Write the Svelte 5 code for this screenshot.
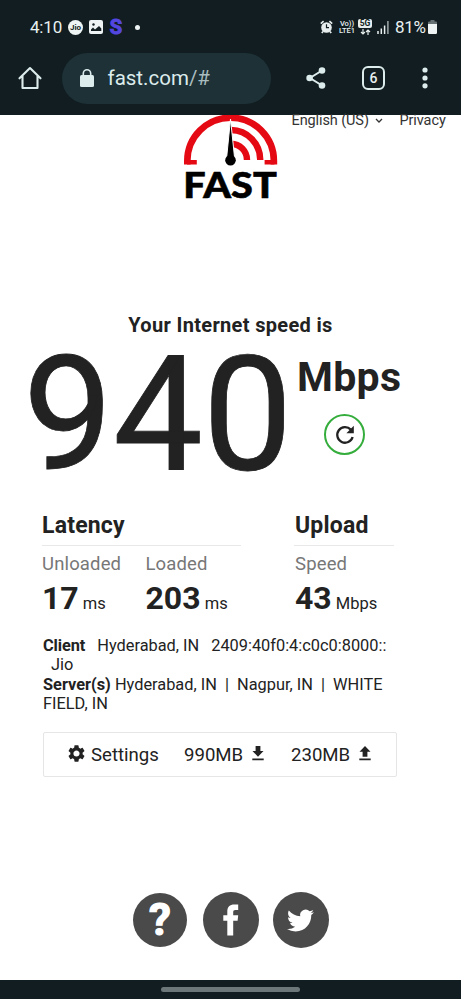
<script>
	let speed = $state(940);

	const latency = [
		{ label: 'Unloaded', value: 17, unit: 'ms' },
		{ label: 'Loaded', value: 203, unit: 'ms' }
	];
	const upload = [{ label: 'Speed', value: 43, unit: 'Mbps' }];
</script>

{#snippet metrics(items)}
	<div class="metrics">
		{#each items as item}
			<div class="metric">
				<div class="metric-label">{item.label}</div>
				<div class="metric-value"><b>{item.value}</b> <span>{item.unit}</span></div>
			</div>
		{/each}
	</div>
{/snippet}

<div class="phone">
	<header class="chrome">
		<div class="status">
			<span class="clock">4:10</span>
			<span class="jio">Jio</span>
			<svg class="photo" width="14" height="14" viewBox="0 0 14 14">
				<rect width="14" height="14" rx="2" fill="#eef3f3" />
				<path d="M2 11V9.500l2-2 2 2 4-3.500 2.300 2.500V11z" fill="#111d20" />
				<circle cx="4.500" cy="4.500" r="1.200" fill="#111d20" />
			</svg>
			<span class="s-logo">S</span>
			<span class="dot"></span>
			<span class="spacer"></span>
			<svg class="alarm" width="13" height="14" viewBox="0 0 13 14">
				<circle cx="6.500" cy="7.500" r="5.300" fill="#e8eeee" />
				<path d="M.8 3.600 3.600 1.200M12.200 3.600 9.400 1.200M3 11.500 1.800 13M10 11.500 11.200 13" stroke="#e8eeee" stroke-width="1.700" />
				<path d="M6.500 4.300v3.400H9" fill="none" stroke="#111d20" stroke-width="1.200" />
			</svg>
			<span class="volte"><span>Vo))</span><span>LTE1</span></span>
			<span class="five-g">
				<span>5G</span>
				<svg width="11" height="6" viewBox="0 0 11 6">
					<path d="M3 0v5M1 3l2 2 2-2M8 6V1M6 3l2-2 2 2" fill="none" stroke="#e8eeee" stroke-width="1.200" />
				</svg>
			</span>
			<svg class="signal" width="12" height="13" viewBox="0 0 12 13">
				<path d="M1 10v3M4.300 7.500V13M7.600 4.500V13" stroke="#e8eeee" stroke-width="1.500" />
				<path d="M10.900 0v13" stroke="#9fa9ab" stroke-width="1.500" />
			</svg>
			<span class="percent">81%</span>
			<svg class="battery" width="9" height="14" viewBox="0 0 9 14">
				<path d="M2.500 0h4v1.500H8a1 1 0 0 1 1 1V6H0V2.500a1 1 0 0 1 1-1h1.500z" fill="#667174" />
				<path d="M0 4h9v8.800a1.200 1.200 0 0 1-1.200 1.200H1.200A1.200 1.200 0 0 1 0 12.800z" fill="#eef3f3" />
			</svg>
		</div>

		<div class="toolbar">
			<svg class="home" width="24" height="24" viewBox="0 0 24 24">
				<path d="M1.500 12.300 12 2l10.500 10.300M4.500 10v12h15V10" fill="none" stroke="#dcebec" stroke-width="2.100" stroke-linejoin="round" stroke-linecap="round" />
			</svg>
			<div class="address">
				<svg width="14" height="18" viewBox="0 0 14 18">
					<rect y="6" width="14" height="12" rx="1.500" fill="#dcebec" />
					<path d="M3.300 7V4.500a3.700 3.700 0 0 1 7.400 0V7" fill="none" stroke="#dcebec" stroke-width="1.600" />
				</svg>
				<span class="url">fast.com<i>/#</i></span>
			</div>
			<svg class="share" width="20" height="22" viewBox="0 0 20 22">
				<path d="M16 3.500 4 11l12 7.500" fill="none" stroke="#dcebec" stroke-width="2" />
				<circle cx="16" cy="3.500" r="3.300" fill="#dcebec" />
				<circle cx="3.600" cy="11" r="3.300" fill="#dcebec" />
				<circle cx="16" cy="18.500" r="3.300" fill="#dcebec" />
			</svg>
			<span class="tabs">6</span>
			<svg class="more" width="6" height="22" viewBox="0 0 6 22">
				<circle cx="3" cy="3" r="2.600" fill="#dcebec" />
				<circle cx="3" cy="11" r="2.600" fill="#dcebec" />
				<circle cx="3" cy="18.800" r="2.600" fill="#dcebec" />
			</svg>
		</div>
	</header>

	<main class="page">
		<div class="top">
			<svg class="logo" width="96" height="90" viewBox="183 115 96 90">
				<g fill="none" stroke="#e50914">
					<path d="M187.300 164.500V161a43.300 43.300 0 0 1 86.600 0v3.500" stroke-width="6.600" />
					<path d="M187 162.200h9.800M264.600 162.200h9.800" stroke-width="4.600" />
					<path d="M231 130a29.500 29.500 0 0 1 29.200 30" stroke-width="6.400" />
					<path d="M231 143.800a16.200 16.200 0 0 1 16 16.200" stroke-width="6.400" />
				</g>
				<path d="m230.500 119-3.800 38a5.500 5.500 0 0 0 7.800 0z" fill="#000" stroke="#fff" stroke-width="1" />
				<circle cx="230.500" cy="160.200" r="5.300" fill="#000" />
				<text x="183.300" y="197.500" textLength="93.500" lengthAdjust="spacingAndGlyphs">FAST</text>
			</svg>
			<nav class="links">
				<span class="lang">English (US)</span>
				<svg width="8" height="6" viewBox="0 0 8 6">
					<path d="m1 1 3 3 3-3" fill="none" stroke="#333" stroke-width="1.300" />
				</svg>
				<span class="privacy">Privacy</span>
			</nav>
		</div>

		<h1>Your Internet speed is</h1>

		<section class="speed">
			<div class="number">{speed}</div>
			<div class="side">
				<div class="unit">Mbps</div>
				<div class="refresh">
					<svg width="20" height="20" viewBox="0 0 20 20">
						<path d="M15.800 4.600A7.800 7.800 0 1 0 17.600 12" fill="none" stroke="#222" stroke-width="2.300" />
						<path d="M18.800.8v7.400h-7.400z" fill="#222" />
					</svg>
				</div>
			</div>
		</section>

		<section class="details">
			<div class="latency">
				<h2>Latency</h2>
				{@render metrics(latency)}
			</div>
			<div class="upload">
				<h2>Upload</h2>
				{@render metrics(upload)}
			</div>
		</section>

		<section class="info">
			<div><b class="client">Client</b><span class="place">Hyderabad, IN</span><span>2409:40f0:4:c0c0:8000::</span></div>
			<div class="isp">Jio</div>
			<div class="servers"><b>Server(s)</b> Hyderabad, IN &nbsp;|&nbsp; Nagpur, IN &nbsp;|&nbsp; WHITE</div>
			<div>FIELD, IN</div>
		</section>

		<section class="box">
			<svg class="gear" width="19" height="19" viewBox="2 2 20 20">
				<path fill="#222" d="M19.140 12.940c.04-.3.060-.61.060-.94s-.02-.64-.07-.94l2.030-1.580a.49.49 0 0 0 .12-.61l-1.920-3.320a.488.488 0 0 0-.59-.22l-2.390.96a7 7 0 0 0-1.620-.94l-.36-2.540a.484.484 0 0 0-.48-.41h-3.840c-.24 0-.43.17-.47.41l-.36 2.540c-.59.24-1.130.57-1.620.94l-2.390-.96a.48.48 0 0 0-.59.22L2.740 8.870c-.12.21-.08.47.12.61l2.030 1.580c-.05.3-.09.63-.09.94s.02.64.07.94l-2.030 1.580a.49.49 0 0 0-.12.61l1.920 3.320c.12.22.37.29.59.22l2.390-.96c.5.38 1.030.7 1.620.94l.36 2.540c.05.24.24.41.48.41h3.840c.24 0 .44-.17.47-.41l.36-2.540c.59-.24 1.130-.56 1.620-.94l2.390.96c.22.08.47 0 .59-.22l1.920-3.320a.48.48 0 0 0-.12-.61zM12 15.600A3.610 3.610 0 0 1 8.400 12c0-1.980 1.620-3.600 3.600-3.600s3.600 1.620 3.600 3.600-1.620 3.600-3.600 3.600" />
			</svg>
			<span class="settings">Settings</span>
			<span class="down">990MB</span>
			<svg class="arrow" width="12" height="15" viewBox="0 0 12 15">
				<path d="M3.600 0h4.800v5h3.100L6 10.800.5 5h3.100zM.3 12.500h11.400v1.700H.3z" fill="#222" />
			</svg>
			<span class="up">230MB</span>
			<svg class="arrow" width="12" height="15" viewBox="0 0 12 15">
				<path d="M3.600 10.800h4.800v-5h3.100L6 0 .5 5.800h3.100zM.3 12.500h11.400v1.700H.3z" fill="#222" />
			</svg>
		</section>

		<footer class="social">
			<span class="round help">?</span>
			<span class="round">
				<svg width="56" height="56" viewBox="0 0 56 56">
					<path fill="#fff" d="M24.300 43.500V28.700h-4v-5.500h4v-3.600c0-4.800 2.400-7.100 7.100-7.100h3.800v5.400h-2.700c-1.800 0-2.300.8-2.300 2.400v2.900h5l-.6 5.500h-4.400v14.800z" />
				</svg>
			</span>
			<span class="round">
				<svg width="27" height="27" viewBox="0 0 24 24">
					<path fill="#fff" d="M23.950 4.570a10 10 0 0 1-2.820.77 4.960 4.960 0 0 0 2.160-2.720c-.95.550-2 .95-3.130 1.180a4.920 4.920 0 0 0-8.380 4.480C7.690 8.090 4.070 6.130 1.640 3.160a4.820 4.820 0 0 0-.67 2.480c0 1.710.87 3.210 2.190 4.100a4.900 4.900 0 0 1-2.230-.620v.060a4.920 4.920 0 0 0 3.950 4.830 5 5 0 0 1-2.210.080 4.940 4.940 0 0 0 4.600 3.420A9.870 9.870 0 0 1 0 19.540a13.990 13.990 0 0 0 7.560 2.210c9.050 0 14-7.500 14-13.980 0-.210 0-.420-.020-.630a9.940 9.940 0 0 0 2.410-2.570z" />
				</svg>
			</span>
		</footer>
	</main>

	<div class="gesture"><span></span></div>
</div>

<style>
	:global(body) { margin: 0; background: #fff; }

	.phone {
		display: flex;
		flex-direction: column;
		width: 461px;
		height: 999px;
		overflow: hidden;
		font-family: Roboto, "Liberation Sans", sans-serif;
		color: #222;
	}

	svg { display: block; flex: none; }
	span, b { white-space: nowrap; }

	.chrome {
		height: 115px;
		flex: none;
		box-sizing: border-box;
		background: #111d20;
		color: #e8f0f0;
	}

	.status {
		display: flex;
		align-items: center;
		height: 48px;
		padding: 3px 24px 1px 30px;
	}

	.clock { width: 32px; font-size: 17px; letter-spacing: -0.2px; }

	.jio {
		width: 15px;
		height: 15px;
		margin-left: 6px;
		border-radius: 50%;
		background: #eef3f3;
		color: #111d20;
		font-size: 8px;
		font-weight: 700;
		line-height: 15px;
		text-align: center;
	}

	.photo { margin-left: 6px; }

	.s-logo {
		width: 14px;
		margin-left: 6px;
		color: #5347e0;
		font: 700 20px/20px Roboto, sans-serif;
		text-align: center;
		-webkit-text-stroke: 1px #5347e0;
	}

	.dot { width: 5px; height: 5px; margin-left: 11.500px; border-radius: 50%; background: #eef3f3; }
	.spacer { flex: 1; }

	.volte {
		display: flex;
		flex-direction: column;
		align-items: center;
		width: 18px;
		margin-left: 5px;
		font-size: 7.500px;
		font-weight: 500;
		line-height: 7px;
	}

	.five-g {
		display: flex;
		flex-direction: column;
		align-items: center;
		gap: 1px;
		width: 14px;
		margin-left: 2px;
	}

	.five-g span {
		width: 14px;
		border-radius: 2px;
		background: #e8eeee;
		color: #111d20;
		font-size: 8.500px;
		font-weight: 700;
		line-height: 9px;
		text-align: center;
	}

	.signal { margin-left: 5px; }
	.percent { width: 31px; margin-left: 6px; font-size: 17px; letter-spacing: -0.3px; }
	.battery { margin-left: 2px; }

	.toolbar { display: flex; align-items: center; height: 52px; padding-left: 18px; }

	.address {
		display: flex;
		align-items: center;
		box-sizing: border-box;
		width: 209px;
		height: 51px;
		margin-left: 20px;
		padding-left: 18px;
		border-radius: 26px;
		background: #1d3136;
	}

	.url { margin-left: 13.500px; font-size: 20.500px; line-height: 53px; color: #dcebec; }
	.url i { font-style: normal; color: #a9bcbf; }
	.share { margin-left: 35px; }

	.tabs {
		box-sizing: border-box;
		width: 23px;
		height: 24px;
		margin-left: 36px;
		border: 2.200px solid #dcebec;
		border-radius: 6px;
		font-size: 14px;
		font-weight: 500;
		line-height: 20px;
		text-align: center;
	}

	.more { margin-left: 37px; }

	.page { flex: 1; }

	.top { display: flex; height: 198px; }
	.logo { margin-left: 183px; }
	.logo text { font: 900 36px Lato, sans-serif; fill: #000; stroke: #000; stroke-width: 0.6px; }

	.links {
		display: flex;
		align-items: center;
		height: 11px;
		margin-left: 12.500px;
		font-size: 14.500px;
		letter-spacing: -0.1px;
		line-height: 11px;
		color: #333;
	}

	.lang { width: 77px; }
	.links svg { margin-left: 6px; }
	.privacy { margin-left: 17px; }

	h1 { margin: 0; font-size: 20px; letter-spacing: 0.330px; line-height: 24px; font-weight: 700; text-align: center; }

	.speed { display: flex; height: 168px; }

	.number {
		width: 274px;
		margin-left: 23px;
		font-size: 160px;
		line-height: 155px;
		-webkit-text-stroke: 0.8px #222;
	}

	.side { display: flex; flex-direction: column; align-items: flex-start; }
	.unit { height: 77px; padding-top: 14px; box-sizing: border-box; font-size: 41px; line-height: 52px; font-weight: 700; letter-spacing: 0.3px; }

	.refresh {
		display: flex;
		align-items: center;
		justify-content: center;
		box-sizing: border-box;
		width: 41px;
		height: 41px;
		margin-left: 27px;
		border: 2px solid #35ad3c;
		border-radius: 50%;
	}

	.details { display: flex; gap: 53px; height: 131px; padding: 5px 0 0 42px; box-sizing: border-box; }
	.latency { width: 199px; }
	.upload { width: 100px; }
	.upload h2 { text-indent: 1px; }
	.upload .metrics { margin-left: 1px; }

	h2 {
		margin: 0;
		border-bottom: 1px solid #e8e8e8;
		font-size: 23px;
		letter-spacing: 0.2px;
		line-height: 32px;
		padding-bottom: 3px;
		font-weight: 700;
	}

	.metrics { display: flex; gap: 4px; }
	.metric { width: 100px; flex: none; }
	.metric:first-child { width: 99.500px; }
	.metric-label { margin-top: 6px; font-size: 18.500px; letter-spacing: 0.150px; line-height: 25px; color: #777; }
	.metric-value { font-size: 16.500px; line-height: 43px; white-space: nowrap; }
	.metric-value b { font-size: 32px; }

	.info { height: 96px; padding: 0 0 0 43px; font-size: 16.350px; line-height: 19.400px; }
	.client { margin-right: 12px; letter-spacing: -0.1px; }
	.place { margin-right: 12px; }
	.isp { padding-left: 8px; }

	.box {
		display: flex;
		align-items: center;
		box-sizing: border-box;
		width: 354px;
		height: 45px;
		margin-left: 43px;
		padding-left: 24px;
		border: 1.500px solid #e6e6e6;
		border-radius: 2px;
		font-size: 18.600px;
	}

	.gear { width: 17px; height: 17px; margin-top: -3px; }
	.settings { width: 70px; margin-left: 6px; }
	.down { width: 60px; margin-left: 23px; }
	.up { width: 60px; margin-left: 27px; }
	.arrow { margin: -3px 0 0 8px; }

	.social { display: flex; align-items: center; gap: 14px; height: 56px; padding: 115px 0 0 133px; }

	.round {
		display: flex;
		align-items: center;
		justify-content: center;
		width: 56px;
		height: 56px;
		border-radius: 50%;
		background: #4a4a4a;
		color: #fff;
	}

	.help { width: 54px; height: 54px; margin-right: 1.500px; font: 700 44px/52px Roboto, sans-serif; -webkit-text-stroke: 1.200px #fff; }

	.gesture {
		display: flex;
		justify-content: center;
		align-items: center;
		flex: none;
		height: 19px;
		background: #111d20;
	}

	.gesture span { width: 139px; height: 5px; border-radius: 3px; background: #6c777a; }
</style>
